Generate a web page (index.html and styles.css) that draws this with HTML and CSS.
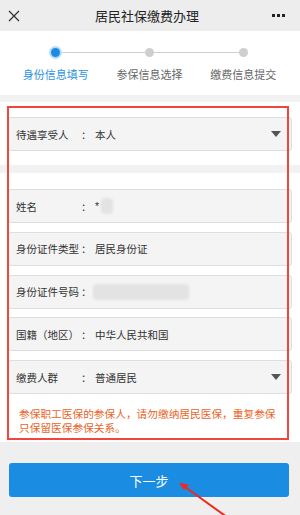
FILE: index.html
```html
<!DOCTYPE html>
<html lang="zh-CN">
<head>
    <meta charset="UTF-8">
    <meta name="viewport" content="width=device-width, initial-scale=1.0">
    <title>居民社保缴费办理</title>
    <link rel="stylesheet" href="styles.css">
</head>
<body>

<!-- Top bar -->
<div class="topbar">
    <svg class="close-icon" width="12" height="12" viewBox="0 0 12 12">
        <path d="M1 1 L11 11 M11 1 L1 11" stroke="#333" stroke-width="1.3" fill="none"/>
    </svg>
    <div class="topbar-title">居民社保缴费办理</div>
    <div class="more-icon"><span></span><span></span><span></span></div>
</div>

<!-- Steps -->
<div class="steps">
    <div class="step active">
        <div class="step-dot"></div>
        <div class="step-label">身份信息填写</div>
    </div>
    <div class="step">
        <div class="step-dot"></div>
        <div class="step-label">参保信息选择</div>
    </div>
    <div class="step">
        <div class="step-dot"></div>
        <div class="step-label">缴费信息提交</div>
    </div>
</div>

<div class="band"></div>

<div class="form">
    <div class="field select">
        <span class="field-label">待遇享受人</span>
        <span class="colon">：</span>
        <span class="field-value">本人</span>
        <span class="caret"></span>
    </div>

    <div class="band inner"></div>

    <div class="field">
        <span class="field-label">姓名</span>
        <span class="colon">：</span>
        <span class="field-value">*<span class="blur short"></span></span>
    </div>
    <div class="field">
        <span class="field-label">身份证件类型</span>
        <span class="colon">：</span>
        <span class="field-value">居民身份证</span>
    </div>
    <div class="field">
        <span class="field-label">身份证件号码</span>
        <span class="colon">：</span>
        <span class="field-value"><span class="blur long"></span></span>
    </div>
    <div class="field">
        <span class="field-label">国籍（地区）</span>
        <span class="colon">：</span>
        <span class="field-value">中华人民共和国</span>
    </div>
    <div class="field select">
        <span class="field-label">缴费人群</span>
        <span class="colon">：</span>
        <span class="field-value">普通居民</span>
        <span class="caret"></span>
    </div>

    <p class="notice">参保职工医保的参保人，请勿缴纳居民医保，重复参保只保留医保参保关系。</p>

    <!-- annotation box -->
    <div class="mark-box"></div>
</div>

<div class="footer">
    <button class="next-btn">下一步</button>
    <svg class="mark-arrow" width="60" height="40" viewBox="0 0 60 40">
        <path d="M2 2 L52 38" stroke="#f0281e" stroke-width="2" fill="none"/>
        <path d="M0 1 L10 2.5 L5 8 Z" fill="#f0281e"/>
    </svg>
</div>

</body>
</html>
```

FILE: styles.css
```css
body {
    margin: 0;
    padding: 0;
    width: 300px;
    height: 515px;
    overflow: hidden;
    background: #efefef;
    font-family: "Liberation Sans", "Noto Sans CJK SC", sans-serif;
    color: #333;
}

/* Top bar */
.topbar {
    height: 31px;
    background: #ededed;
    display: flex;
    align-items: center;
    justify-content: space-between;
    padding: 0 14px 0 8px;
}

.close-icon {
    display: block;
}

.topbar-title {
    font-size: 13px;
    color: #222;
    margin-left: 2px;
}

.more-icon {
    display: flex;
    gap: 2px;
    width: 14px;
}

.more-icon span {
    width: 3px;
    height: 3px;
    background: #222;
}

/* Steps */
.steps {
    height: 64px;
    background: #fff;
    display: flex;
    padding: 0 10px 0 9px;
}

.step {
    flex: 1;
    position: relative;
    display: flex;
    flex-direction: column;
    align-items: center;
    padding-top: 16px;
}

.step::before {
    content: "";
    position: absolute;
    top: 21px;
    left: 50%;
    width: 100%;
    height: 1px;
    background: #d0d0d0;
}

.step:last-child::before {
    display: none;
}

.step-dot {
    position: relative;
    width: 9px;
    height: 9px;
    border-radius: 50%;
    background: #cfcfcf;
    margin-top: 1px;
}

.step.active .step-dot {
    background: #1b8ae2;
    box-shadow: 0 0 0 2px #b9dcf7;
}

.step-label {
    font-size: 11px;
    color: #666;
    margin-top: 9px;
    white-space: nowrap;
}

.step.active .step-label {
    color: #2c92de;
}

.band {
    height: 7px;
    background: #f2f2f2;
}

.band.inner {
    margin: 14px -8px 16px -8px;
    height: 8px;
}

/* Form */
.form {
    position: relative;
    background: #fff;
    padding: 15px 8px 7px 8px;
}

.field {
    box-sizing: border-box;
    height: 34px;
    display: flex;
    align-items: center;
    background: #f4f4f4;
    border: 1px solid #dedede;
    border-radius: 3px;
    margin-bottom: 8.75px;
    font-size: 10.5px;
    color: #333;
    padding: 0 10px 0 7px;
}

.field-label {
    width: 65px;
    white-space: nowrap;
}

.colon {
    width: 14px;
}

.field-value {
    flex: 1;
    display: flex;
    align-items: center;
}

.caret {
    width: 0;
    height: 0;
    border-left: 5px solid transparent;
    border-right: 5px solid transparent;
    border-top: 6px solid #555;
}

.blur {
    display: inline-block;
    background: #e3e3e3;
    border-radius: 4px;
    filter: blur(1px);
}

.blur.short {
    width: 12px;
    height: 16px;
    margin-left: 2px;
}

.blur.long {
    width: 96px;
    height: 16px;
    margin-left: -2px;
}

.notice {
    margin: 13px 12px 0 11px;
    font-size: 10.7px;
    line-height: 14px;
    color: #e8641f;
}

.mark-box {
    position: absolute;
    top: 4px;
    left: 7px;
    width: 278px;
    height: 330px;
    border: 2px solid #f2453d;
    pointer-events: none;
}

/* Footer */
.footer {
    position: relative;
    padding: 21px 11px 0 9px;
}

.next-btn {
    display: block;
    width: 100%;
    height: 34px;
    border: none;
    border-radius: 3px;
    background: #1a8de3;
    color: #fff;
    font-family: "Liberation Sans", "Noto Sans CJK SC", sans-serif;
    font-size: 13px;
}

.mark-arrow {
    position: absolute;
    left: 179px;
    top: 40px;
}
```
